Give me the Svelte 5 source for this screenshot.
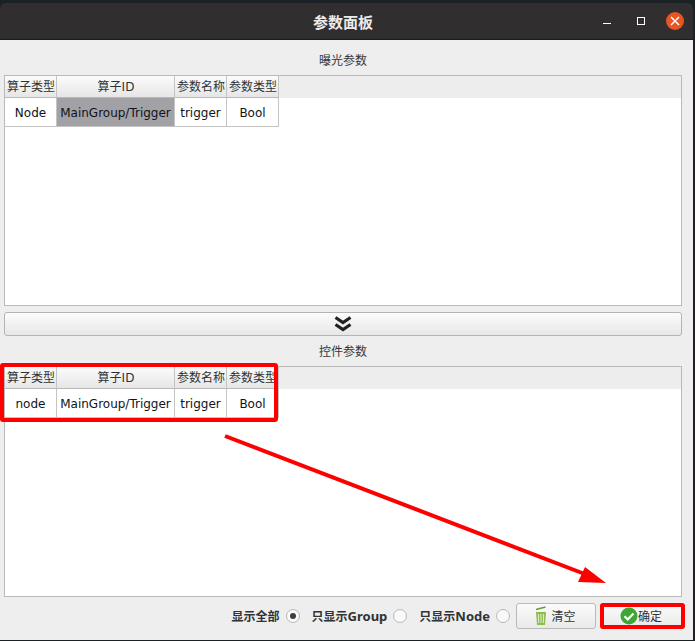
<script>
  const columns = [
    { title: '算子类型', width: 52 },
    { title: '算子ID', width: 118 },
    { title: '参数名称', width: 52 },
    { title: '参数类型', width: 52 }
  ];
  const exposure = ['Node', 'MainGroup/Trigger', 'trigger', 'Bool'];
  const control = ['node', 'MainGroup/Trigger', 'trigger', 'Bool'];
  const filters = [
    { label: '显示全部', latin: '', checked: true },
    { label: '只显示', latin: 'Group', checked: false },
    { label: '只显示', latin: 'Node', checked: false }
  ];
</script>

{#snippet paramTable(row, selected)}
  <div class="table">
    <div class="head">
      {#each columns as col}
        <div class="th" style="width: {col.width}px">{col.title}</div>
      {/each}
    </div>
    <div class="row">
      {#each row as cell, i}
        <div class="td" class:selected={selected && i === 1} style="width: {columns[i].width}px">{cell}</div>
      {/each}
    </div>
  </div>
{/snippet}

<div class="desktop">
  <div class="window">
    <header class="titlebar">
      <span class="title">参数面板</span>
      <div class="controls">
        <span class="min"></span>
        <span class="max"></span>
        <span class="close">
          <svg width="12" height="12" viewBox="0 0 12 12"><path d="M2 2l8 8M10 2l-8 8" stroke="#fff" stroke-width="1.5" /></svg>
        </span>
      </div>
    </header>

    <main class="body">
      <div class="caption first">曝光参数</div>
      {@render paramTable(exposure, true)}

      <button class="splitter" aria-label="collapse">
        <svg width="18" height="16" viewBox="0 0 18 16">
          <path d="M1.5 1.5L9 6.5l7.5-5M1.5 8.5L9 13.5l7.5-5" fill="none" stroke="#222" stroke-width="3.2" />
        </svg>
      </button>

      <div class="caption second">控件参数</div>
      {@render paramTable(control, false)}

      <footer class="actions">
        {#each filters as f}
          <span class="filter">
            <span>{f.label}<span class="latin">{f.latin}</span></span>
            <span class="radio" class:on={f.checked}></span>
          </span>
        {/each}
        <button class="btn clear">
          <svg width="14" height="20" viewBox="0 0 14 20">
            <path d="M2 3.5L11.5 1" stroke="#6f9a3a" stroke-width="1.6" fill="none" />
            <path d="M2 6h10l-1 13H3z" fill="#8fbc4c" />
            <path d="M4.6 8v9M7 8v9M9.4 8v9" stroke="#e4f0cf" stroke-width="1" />
          </svg>
          清空
        </button>
        <button class="btn confirm">
          <svg width="18" height="18" viewBox="0 0 18 18">
            <circle cx="9" cy="9" r="8.5" fill="#3fa535" />
            <path d="M4.5 9.2l3.2 3.2 5.8-6" fill="none" stroke="#fff" stroke-width="2.2" />
          </svg>
          确定
        </button>
      </footer>
    </main>
  </div>

  <!-- red annotations on top of the screenshot -->
  <div class="mark mark-table"></div>
  <div class="mark mark-ok"></div>
  <svg class="arrow" width="695" height="641" viewBox="0 0 695 641">
    <path d="M225 436L590 576" stroke="#fe0000" stroke-width="4" fill="none" />
    <path d="M606 583L585 567L578 582z" fill="#fe0000" />
  </svg>
</div>

<style>
  :global(body) {
    margin: 0;
  }
  .desktop {
    position: relative;
    width: 695px;
    height: 641px;
    overflow: hidden;
    background: #1b2226;
    font-family: "DejaVu Sans", "Noto Sans CJK SC", sans-serif;
    color: #2e3436;
  }
  .window {
    width: 693px;
    height: 640px;
    padding-top: 3px;
    box-sizing: border-box;
    display: flex;
    flex-direction: column;
  }
  .titlebar {
    height: 37px;
    flex: none;
    box-sizing: border-box;
    background: #302e2e;
    border-radius: 6px 6px 0 0;
    border-bottom: 1px solid #1c1b1b;
    display: flex;
    align-items: center;
    justify-content: center;
    position: relative;
  }
  .title {
    color: #ebebeb;
    font-size: 15px;
    font-weight: 700;
    margin-right: 7px;
    font-family: "Noto Sans CJK SC", sans-serif;
  }
  .controls {
    position: absolute;
    right: 9px;
    top: 9px;
    display: flex;
    align-items: center;
  }
  .min {
    width: 8px;
    height: 1px;
    border-top: 1px solid #fff;
    margin-top: 6px;
    margin-right: 26px;
  }
  .max {
    width: 6px;
    height: 6px;
    border: 1px solid #fff;
    margin-right: 21px;
  }
  .close {
    width: 18px;
    height: 18px;
    border-radius: 50%;
    background: #e95420;
    display: flex;
    align-items: center;
    justify-content: center;
  }
  .body {
    flex: 1;
    background: #eeeeee;
    padding: 0 11px 0 4px;
    display: flex;
    flex-direction: column;
  }
  .caption {
    height: 15px;
    line-height: 15px;
    font-size: 12px;
    text-align: center;
    font-family: "Noto Sans CJK SC", sans-serif;
    color: #33383a;
  }
  .first {
    margin-top: 12px;
    margin-bottom: 8px;
  }
  .second {
    margin-top: 7px;
    margin-bottom: 8px;
  }
  .table {
    height: 231px;
    flex: none;
    box-sizing: border-box;
    border: 1px solid #b9b9b9;
    background: #fff;
  }
  .head {
    display: flex;
    height: 22px;
    background: #ededed;
  }
  .th {
    box-sizing: border-box;
    line-height: 23px;
    padding-left: 1px;
    text-align: center;
    font-size: 12px;
    background: linear-gradient(#fbfbfb, #e6e6e6);
    border-right: 1px solid #c4c4c4;
    border-bottom: 1px solid #b9b9b9;
    white-space: nowrap;
    overflow: hidden;
  }
  .row {
    display: flex;
    height: 29px;
  }
  .td {
    box-sizing: border-box;
    line-height: 30px;
    text-align: center;
    font-size: 12px;
    color: #10131a;
    border-right: 1px solid #c4c4c4;
    border-bottom: 1px solid #c4c4c4;
    white-space: nowrap;
  }
  .selected {
    background: #a2a2a6;
  }
  .splitter {
    height: 24px;
    flex: none;
    margin: 6px 0 0;
    padding: 0;
    box-sizing: border-box;
    border: 1px solid #b4b4b4;
    border-radius: 3px;
    background: linear-gradient(#fcfcfc, #e7e7e7);
    display: flex;
    align-items: center;
    justify-content: center;
  }
  .actions {
    display: flex;
    align-items: center;
    justify-content: flex-end;
    height: 26px;
    margin-top: 6px;
    font-family: "Noto Sans", "Noto Sans CJK SC", sans-serif;
    font-size: 12px;
  }
  .filter {
    display: flex;
    align-items: center;
    font-weight: 700;
    gap: 6px;
    margin-right: 12px;
    color: #2e3436;
  }
  .filter:nth-child(3) {
    margin-right: 6px;
  }
  .latin {
    font-size: 13px;
  }
  .radio {
    width: 14px;
    height: 14px;
    box-sizing: border-box;
    border: 1px solid #b8b8b8;
    border-radius: 50%;
    background: #fafafa;
    display: flex;
    align-items: center;
    justify-content: center;
  }
  .radio.on::after {
    content: '';
    width: 6px;
    height: 6px;
    border-radius: 50%;
    background: #3a3f41;
  }
  .btn {
    height: 26px;
    box-sizing: border-box;
    padding: 0;
    border: 1px solid #b9b9b9;
    border-radius: 3px;
    background: linear-gradient(#fbfbfb, #e9e9e9);
    display: flex;
    align-items: center;
    justify-content: center;
    gap: 3px;
    font: inherit;
    color: #2e3436;
  }
  .clear {
    width: 80px;
    padding-right: 2px;
  }
  .confirm {
    width: 81px;
    margin-left: 6px;
    margin-right: -1px;
    gap: 0;
    padding-right: 3px;
  }
  .mark {
    position: absolute;
    box-sizing: border-box;
    border: 4px solid #fe0000;
    border-radius: 3px;
  }
  .mark-table {
    left: 0;
    top: 363px;
    width: 278px;
    height: 59px;
  }
  .mark-ok {
    left: 600px;
    top: 603px;
    width: 85px;
    height: 26px;
  }
  .arrow {
    position: absolute;
    left: 0;
    top: 0;
  }
</style>
